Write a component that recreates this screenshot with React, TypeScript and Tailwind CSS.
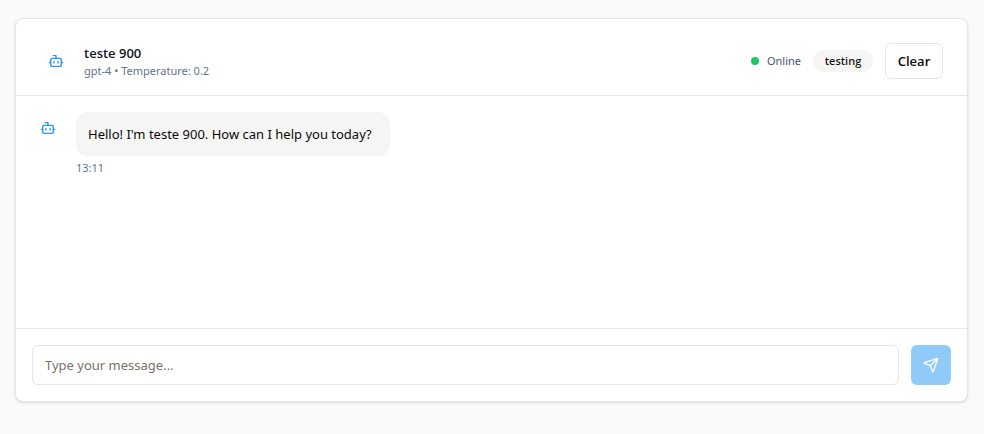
import { useState } from "react";
import { Bot, Send } from "lucide-react";

function BotAvatar() {
  return (
    <div className="flex size-8 shrink-0 items-center justify-center rounded-full text-[#2196f3]">
      <Bot className="size-4" aria-hidden="true" />
    </div>
  );
}

function ChatHeader() {
  return (
    <header className="flex items-center justify-between border-b border-[#e5e5e5] px-6 pt-6 pb-4">
      <div className="flex items-center gap-3">
        <BotAvatar />
        <div>
          <h1 className="font-['Open_Sans',sans-serif] text-[13px] leading-5 font-semibold text-slate-900">teste 900</h1>
          <p className="text-[11px] leading-4 text-slate-500">gpt-4 • Temperature: 0.2</p>
        </div>
      </div>
      <div className="flex items-center gap-3">
        <div className="flex items-center gap-2">
          <span className="size-2 rounded-full bg-[#22c55e]" />
          <span className="text-[11px] leading-4 text-slate-600">Online</span>
        </div>
        <span className="min-w-15 rounded-full bg-[#f5f5f4] px-2.5 py-[3px] text-center font-['Open_Sans',sans-serif] text-[11px] leading-4 font-semibold text-stone-900">
          testing
        </span>
        <button
          type="button"
          className="h-9 min-w-[58px] rounded-md border border-[#e5e5e5] bg-white px-2.5 font-['Open_Sans',sans-serif] text-[13px] leading-5 font-semibold text-stone-950"
        >
          Clear
        </button>
      </div>
    </header>
  );
}

function BotMessage({ text, time }: { text: string; time: string }) {
  return (
    <div className="flex items-start gap-3">
      <BotAvatar />
      <div>
        <p className="rounded-xl bg-[#f5f5f4] py-3 pr-[18px] pl-3 text-[13px] leading-5 text-stone-950">{text}</p>
        <time className="mt-1 block text-[11px] leading-4 text-slate-500">{time}</time>
      </div>
    </div>
  );
}

function MessageForm() {
  const [draft, setDraft] = useState("");
  const empty = draft.trim() === "";

  return (
    <form
      className="flex items-center gap-3 border-t border-slate-200 p-4"
      onSubmit={(event) => {
        event.preventDefault();
        setDraft("");
      }}
    >
      <input
        type="text"
        aria-label="Message"
        placeholder="Type your message..."
        value={draft}
        onChange={(event) => setDraft(event.target.value)}
        className="h-10 min-w-0 flex-1 rounded-md border border-[#e5e5e5] bg-white px-3 text-[13px] leading-5 text-stone-950 placeholder:text-stone-500"
      />
      <button
        type="submit"
        aria-label="Send"
        disabled={empty}
        className="flex size-10 items-center justify-center rounded-md bg-[#2196f3] text-white disabled:opacity-50"
      >
        <Send className="size-4" aria-hidden="true" />
      </button>
    </form>
  );
}

export default function App() {
  return (
    <div className="min-h-screen bg-slate-50 pt-[18px] pr-4 pb-8 pl-[15px] font-['Noto_Sans',sans-serif]">
      <main className="flex flex-col rounded-lg border border-[#e5e5e5] bg-white shadow-sm">
        <ChatHeader />
        <section aria-label="Messages" className="min-h-58 p-4">
          <BotMessage text="Hello! I'm teste 900. How can I help you today?" time="13:11" />
        </section>
        <MessageForm />
      </main>
    </div>
  );
}
